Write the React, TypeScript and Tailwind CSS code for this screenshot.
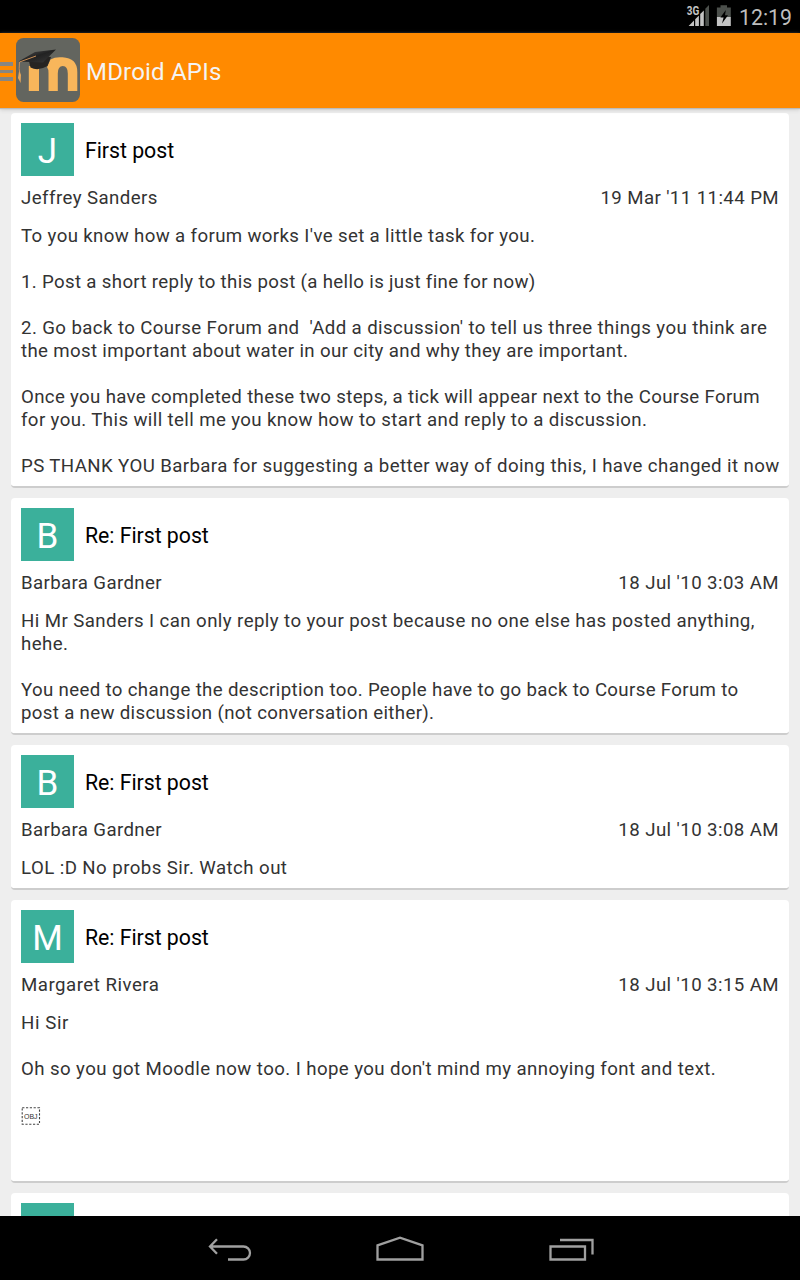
import React from "react";

type Line = { text: string; tracking: number };

type Post = {
  initial: string;
  title: string;
  author: Line;
  date: Line;
  body: Line[];
};

const OBJECT = "\uFFFC";

const line = (text: string, tracking = 0.38): Line => ({ text, tracking });
const blank = line("");

const posts: Post[] = [
  {
    initial: "J",
    title: "First post",
    author: line("Jeffrey Sanders", 0.43),
    date: line("19 Mar '11 11:44 PM", 0.4),
    body: [
      line("To you know how a forum works I've set a little task for you.", 0.36),
      blank,
      line("1. Post a short reply to this post (a hello is just fine for now)", 0.335),
      blank,
      line("2. Go back to Course Forum and  'Add a discussion' to tell us three things you think are", 0.4),
      line("the most important about water in our city and why they are important.", 0.345),
      blank,
      line("Once you have completed these two steps, a tick will appear next to the Course Forum", 0.33),
      line("for you. This will tell me you know how to start and reply to a discussion.", 0.38),
      blank,
      line("PS THANK YOU Barbara for suggesting a better way of doing this, I have changed it now", 0.395),
    ],
  },
  {
    initial: "B",
    title: "Re: First post",
    author: line("Barbara Gardner", 0.36),
    date: line("18 Jul '10 3:03 AM", 0.41),
    body: [
      line("Hi Mr Sanders I can only reply to your post because no one else has posted anything,", 0.415),
      line("hehe.", 0.4),
      blank,
      line("You need to change the description too. People have to go back to Course Forum to", 0.345),
      line("post a new discussion (not conversation either).", 0.33),
    ],
  },
  {
    initial: "B",
    title: "Re: First post",
    author: line("Barbara Gardner", 0.36),
    date: line("18 Jul '10 3:08 AM", 0.41),
    body: [line("LOL :D No probs Sir. Watch out", 0.43)],
  },
  {
    initial: "M",
    title: "Re: First post",
    author: line("Margaret Rivera", 0.5),
    date: line("18 Jul '10 3:15 AM", 0.41),
    body: [
      line("Hi Sir", 0.6),
      blank,
      line("Oh so you got Moodle now too. I hope you don't mind my annoying font and text.", 0.415),
      blank,
      line(OBJECT),
      blank,
      blank,
    ],
  },
];

function StatusBar() {
  return (
    <div className="flex h-[33px] shrink-0 items-center justify-end bg-black pr-[8px]">
      <svg className="mr-[6px] h-[33px] w-[24px]" viewBox="0 0 24 33">
        <path d="M23 5V26H19.300V8.700z" fill="#4c504c" />
        <path d="M17.800 10.500V26H14.200V14z" fill="#c4c4c4" />
        <path d="M12.900 15.500V26H9.200V19.300z" fill="#c4c4c4" />
        <path d="M8 20.500V26H2.600z" fill="#c4c4c4" />
        <path d="M0 0H14V14L13 15.500H0z" fill="#000" />
        <text
          x="0.8"
          y="14.6"
          fontSize="12"
          fontWeight="700"
          fontFamily="Roboto, sans-serif"
          textLength="12.5"
          lengthAdjust="spacingAndGlyphs"
          fill="#c4c4c4"
        >
          3G
        </text>
      </svg>
      <svg className="mr-[8px] h-[33px] w-[15px]" viewBox="0 0 15 33">
        <path d="M4.500 5.300h6.500v2.200h3.800v9.700H.9V7.500h3.600z" fill="#4c504c" />
        <path d="M.9 17h13.900v9H.9z" fill="#c4c4c4" />
        <path d="M9.800 10L4.400 17.500h3.200L6 23.500l6-8.200H9z" fill="#000" />
      </svg>
      <span className="mt-[2px] text-[21.300px] leading-[31px] text-[#bebebe]">12:19</span>
    </div>
  );
}

function MoodleLogo() {
  return (
    <svg className="mb-[2px] h-[64px] w-[64px]" viewBox="0 0 64 64">
      <defs>
        <linearGradient id="cap" x1="0" y1="0" x2="1" y2="1">
          <stop offset="0" stopColor="#5a5a5a" />
          <stop offset=".5" stopColor="#222" />
          <stop offset="1" stopColor="#3a3a3a" />
        </linearGradient>
      </defs>
      <rect width="64" height="64" rx="7.500" fill="#63655f" />
      <path
        d="M12.800 53V28H23v25zM32.500 53V35Q32.500 31 31 29L34.500 21.500Q39.500 18.500 46.500 19.300Q61.300 20 61.300 34V53H51.800V35.500Q51.800 28 46.800 28Q41.800 28 41.800 35.500V53z"
        fill="#f8b65b"
      />
      <path d="M13 23L14.500 29.500Q22 33.500 31.500 28L35 19L26 18z" fill="#262422" />
      <path d="M2.500 23.500L19 14L40 11.500L27 24.500z" fill="url(#cap)" />
      <path d="M20 18L3.500 24Q2.600 31 4 37" fill="none" stroke="#c98f58" strokeWidth="1" />
      <path d="M3.100 33L2 40L4.600 45L5 37z" fill="#e6a65a" />
    </svg>
  );
}

function ActionBar() {
  return (
    <header className="relative z-10 flex h-[75px] shrink-0 items-center bg-[#ff8a00] shadow-[0_1px_1px_#bbb,0_2px_4px_#ccc]">
      <div className="mt-[2px] mr-[3px] flex w-[13px] flex-col gap-[4px]">
        <div className="h-[3.500px] bg-[#888681]" />
        <div className="h-[3.500px] bg-[#888681]" />
        <div className="h-[3.500px] bg-[#888681]" />
      </div>
      <MoodleLogo />
      <h1 className="mt-[2px] ml-[6px] text-[24px] leading-[30px] tracking-[0.2px] whitespace-pre text-[#f4f4f4]">
        MDroid APIs
      </h1>
    </header>
  );
}

function ObjectMark() {
  return (
    <svg className="mt-[4px] h-[18px] w-[20px]" viewBox="0 0 20 18">
      <rect
        x="1.2"
        y=".8"
        width="17.300"
        height="16.400"
        fill="none"
        stroke="#444"
        strokeWidth="1.1"
        strokeDasharray="2.200 1.600"
      />
      <text
        x="9.800"
        y="11.500"
        textAnchor="middle"
        fontSize="7"
        fontFamily="Liberation Sans, sans-serif"
        fill="#333"
      >
        OBJ
      </text>
    </svg>
  );
}

function Tracked({ value }: { value: Line }) {
  return <span style={{ letterSpacing: `${value.tracking}px` }}>{value.text}</span>;
}

function PostCard({ post }: { post: Post }) {
  return (
    <article className="shrink-0 rounded-[4px] border-b-2 border-[#cdcdcd] bg-white px-[10px] pt-[10px] pb-[8px] text-[18.670px] leading-[23px] text-[#333]">
      <div className="flex items-center">
        <div className="flex h-[53px] w-[53px] items-center justify-center bg-[#3bb09b] text-[35px] leading-[53px] text-white">
          <span className="mt-[3px]">{post.initial}</span>
        </div>
        <h2 className="mt-[3px] ml-[11px] text-[21.300px] leading-[26px] tracking-[-0.04px] text-black">
          {post.title}
        </h2>
      </div>
      <div className="mt-[11px] flex h-[23px] justify-between whitespace-pre">
        <Tracked value={post.author} />
        <Tracked value={post.date} />
      </div>
      <div className="mt-[15px]">
        {post.body.map((row, i) => (
          <p key={i} className="flex h-[23px] whitespace-pre">
            {row.text === OBJECT ? (
              <span className="-mt-[1px] flex">
                <ObjectMark />
              </span>
            ) : (
              <Tracked value={row} />
            )}
          </p>
        ))}
      </div>
    </article>
  );
}

function NavBar() {
  return (
    <nav className="flex h-[64px] shrink-0 items-center justify-center gap-[124px] bg-black">
      <svg className="h-[64px] w-[48px]" viewBox="204 0 48 64" fill="none" stroke="#a0a0a0" strokeWidth="2.300">
        <path d="M217 23.300L210 30.500L217 37.700M210 30.500H243.500A6.500 6.500 0 0 1 243.500 43.500H228" />
      </svg>
      <svg className="h-[64px] w-[48px]" viewBox="376 0 48 64" fill="none" stroke="#a0a0a0" strokeWidth="2.300">
        <path d="M377.500 43.500V29.300L400 21.700L422.500 29.300V43.500z" />
      </svg>
      <svg className="h-[64px] w-[48px]" viewBox="548 0 48 64" fill="none" stroke="#a0a0a0" strokeWidth="2.300">
        <path d="M550.500 30.500H585V43.500H550.500zM560 24H592.500V38.500" />
      </svg>
    </nav>
  );
}

export default function App() {
  return (
    <div className="flex h-[1280px] w-[800px] flex-col overflow-hidden bg-[#eee] font-['Roboto',sans-serif]">
      <StatusBar />
      <ActionBar />
      <main className="flex min-h-0 flex-1 flex-col gap-[10px] overflow-hidden px-[11px] pt-[5px]">
        {posts.map((post, i) => (
          <PostCard key={i} post={post} />
        ))}
        <article className="flex-1 rounded-t-[4px] bg-white px-[10px] pt-[10px]">
          <div className="h-full w-[53px] bg-[#3bb09b]" />
        </article>
      </main>
      <NavBar />
    </div>
  );
}
